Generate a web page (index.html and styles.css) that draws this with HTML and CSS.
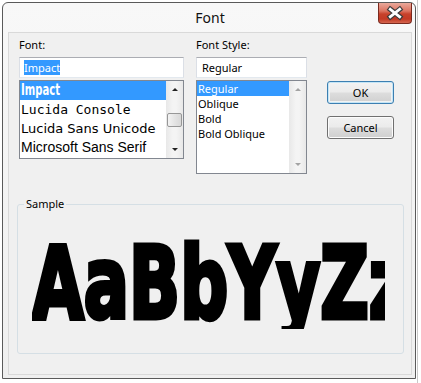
FILE: index.html
```html
<!DOCTYPE html>
<html lang="en">
<head>
    <meta charset="UTF-8">
    <title>Font</title>
    <link rel="stylesheet" href="styles.css">
</head>
<body>

    <!-- Font dialog window -->
    <div class="window">
        <div class="titlebar">
            <span></span>
            <span class="title">Font</span>
            <button class="close-btn" aria-label="Close">
                <svg width="34" height="21" viewBox="0 0 34 21">
                    <path d="M12 6 L22 14 M22 6 L12 14" stroke="#3b3b3b" stroke-width="5.5" stroke-linecap="square"/>
                    <path d="M12 6 L22 14 M22 6 L12 14" stroke="#ffffff" stroke-width="3" stroke-linecap="square"/>
                </svg>
            </button>
        </div>

        <div class="client">
            <div class="top">
                <!-- Font column -->
                <div class="col col-font">
                    <label class="label">Font:</label>
                    <div class="textbox"><span class="sel-text">Impact</span></div>
                    <div class="listbox list-font">
                        <div class="rows">
                            <div class="row selected f-impact"><span>Impact</span></div>
                            <div class="row f-console">Lucida Console</div>
                            <div class="row f-lucida">Lucida Sans Unicode</div>
                            <div class="row f-ms">Microsoft Sans Serif</div>
                        </div>
                        <div class="scrollbar">
                            <div class="arrow up"></div>
                            <div class="track"><div class="thumb"></div></div>
                            <div class="arrow down"></div>
                        </div>
                    </div>
                </div>

                <!-- Font style column -->
                <div class="col col-style">
                    <label class="label">Font Style:</label>
                    <div class="textbox">Regular</div>
                    <div class="listbox list-style">
                        <div class="rows">
                            <div class="row selected">Regular</div>
                            <div class="row">Oblique</div>
                            <div class="row">Bold</div>
                            <div class="row">Bold Oblique</div>
                        </div>
                        <div class="scrollbar disabled">
                            <div class="arrow up"></div>
                            <div class="track"></div>
                            <div class="arrow down"></div>
                        </div>
                    </div>
                </div>

                <!-- Buttons -->
                <div class="col col-buttons">
                    <button class="btn btn-default">OK</button>
                    <button class="btn">Cancel</button>
                </div>
            </div>

            <fieldset class="sample-group">
                <legend>Sample</legend>
                <div class="sample">
                    <span class="sample-text">AaBbYyZz</span>
                </div>
            </fieldset>
        </div>
    </div>

</body>
</html>
```

FILE: styles.css
```css
body {
    margin: 0;
    padding: 2px 0 0 2px;
    height: 383px;
    box-sizing: border-box;
    overflow: hidden;
    background: #ffffff linear-gradient(to right, transparent 417px, #c9c9c9 417px, #c9c9c9 418px, transparent 418px);
    font-family: "Noto Sans", sans-serif;
    font-size: 11px;
    color: #000;
}

.window {
    width: 414px;
    height: 377px;
    box-sizing: border-box;
    border: 1px solid #5a5a5a;
    border-radius: 6px 6px 0 0;
    background: linear-gradient(#f8f8f8, #efefef);
    padding: 0 3px 3px 5px;
    display: flex;
    flex-direction: column;
}

.titlebar {
    height: 29px;
    display: grid;
    grid-template-columns: 1fr auto 1fr;
}

.title {
    font-size: 14px;
    line-height: 29px;
    color: #111;
}

.close-btn {
    justify-self: end;
    align-self: start;
    margin-right: 0;
    width: 34px;
    height: 21px;
    padding: 0;
    border: 1px solid #7a2a1f;
    border-top: none;
    border-radius: 0 0 4px 4px;
    background: linear-gradient(#e9a99b 0%, #dc7461 40%, #c7412b 55%, #c33a25 80%, #d5664f 100%);
    display: flex;
}

.client {
    flex: 1;
    border: 1px solid #d9d9d9;
    background: #f0f0f0;
    display: flex;
    flex-direction: column;
}

.top {
    display: flex;
    padding: 3px 0 0 10px;
}

.col {
    display: flex;
    flex-direction: column;
}

.col-font { width: 165px; }
.col-style { width: 111px; margin-left: 12px; }
.col-buttons { width: 67px; margin-left: 20px; padding-top: 45px; gap: 12px; }

.label {
    line-height: 18px;
    margin-bottom: 3px;
}

.textbox {
    height: 21px;
    box-sizing: border-box;
    border: 1px solid #dbdfe6;
    border-top-color: #abadb3;
    border-bottom-color: #e3e9ef;
    background: #fff;
    line-height: 19px;
    padding-left: 4px;
}

.col-style .textbox { padding-left: 5px; }

.sel-text {
    background: #3399ff;
    color: #fff;
}

.listbox {
    margin-top: 2px;
    box-sizing: border-box;
    border: 1px solid #828790;
    background: #fff;
    display: flex;
}

.list-font { height: 79px; }
.list-style { height: 94px; }

.rows {
    flex: 1;
    overflow: hidden;
}

.row {
    white-space: nowrap;
    padding-left: 1px;
    line-height: 15px;
}

.row.selected {
    background: #3399ff;
    color: #fff;
}

.list-font .row { height: 19px; line-height: 19px; }

.f-impact span {
    display: inline-block;
    font-family: "DejaVu Sans", sans-serif;
    font-weight: bold;
    font-size: 15px;
    transform: scaleX(0.67);
    transform-origin: left center;
}

.f-console { font-family: "DejaVu Sans Mono", monospace; font-size: 13px; }
.f-lucida { font-family: "DejaVu Sans", sans-serif; font-size: 13px; }
.f-ms { font-family: "Liberation Sans", Arial, sans-serif; font-size: 14px; }

.scrollbar {
    width: 17px;
    display: flex;
    flex-direction: column;
    background: linear-gradient(to right, #e8e8e8, #f4f4f4 40%, #f4f4f4 60%, #e8e8e8);
}

.arrow {
    height: 17px;
    display: flex;
    align-items: center;
    justify-content: center;
}

.arrow::before {
    content: "";
    border-left: 3px solid transparent;
    border-right: 3px solid transparent;
}

.arrow.up::before { border-bottom: 3px solid #222; }
.arrow.down::before { border-top: 3px solid #222; }

.scrollbar.disabled .arrow.up::before { border-bottom-color: #a3a3a3; }
.scrollbar.disabled .arrow.down::before { border-top-color: #a3a3a3; }

.track {
    flex: 1;
    padding-top: 15px;
}

.thumb {
    height: 14px;
    margin: 0 1px;
    box-sizing: border-box;
    border: 1px solid #979797;
    border-radius: 2px;
    background: linear-gradient(to right, #f3f3f3, #e4e4e4 50%, #d8d8d8);
}

.btn {
    height: 23px;
    padding: 0;
    font-family: "Noto Sans", sans-serif;
    font-size: 11px;
    color: #000;
    border: 1px solid #707070;
    border-radius: 3px;
    background: linear-gradient(#f2f2f2 0%, #ebebeb 48%, #dddddd 52%, #cfcfcf 100%);
    box-shadow: inset 0 0 0 1px #fcfcfc;
}

.btn-default {
    border-color: #3c7fb1;
    box-shadow: inset 0 0 0 1px #c4e5f6, inset 0 0 0 2px #f2f2f2;
}

.sample-group {
    margin: 21px 0 0 8px;
    width: 387px;
    box-sizing: border-box;
    padding: 0 0 24px 6px;
    border: 1px solid #d5dfe5;
    border-radius: 3px;
}

.sample-group legend {
    padding: 0 2px;
    line-height: 18px;
}

.sample {
    margin: 21px 0 0 8px;
    width: 353px;
    height: 95px;
    overflow: hidden;
}

.sample-text {
    display: inline-block;
    font-family: Impact, "DejaVu Sans", sans-serif;
    font-weight: bold;
    font-size: 100px;
    line-height: 100px;
    white-space: nowrap;
    -webkit-text-stroke: 5px #000;
    transform: scaleX(0.67);
    transform-origin: left top;
}
```
